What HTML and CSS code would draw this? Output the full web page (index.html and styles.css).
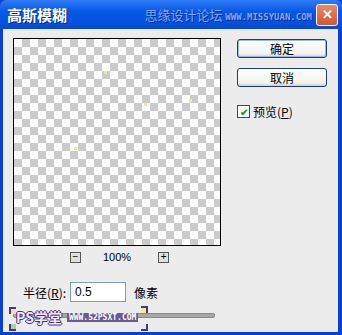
FILE: index.html
```html
<!DOCTYPE html>
<html lang="zh">
<head>
  <meta charset="UTF-8">
  <title>高斯模糊</title>
  <link rel="stylesheet" href="styles.css">
</head>
<body>
  <div class="window">
    <div class="titlebar">
      <span class="title">高斯模糊</span>
      <span class="mark">思缘设计论坛 <small>WWW.MISSYUAN.COM</small></span>
      <button class="close">&#x2715;</button>
    </div>
    <div class="content">
      <div class="main">
        <div class="left">
          <div class="preview">
            <span class="dot" style="left:90px;top:32px"></span>
            <span class="dot" style="left:130px;top:64px"></span>
            <span class="dot" style="left:175px;top:60px"></span>
            <span class="dot" style="left:60px;top:108px"></span>
          </div>
          <div class="zoom">
            <span class="zbtn">&minus;</span>
            <span class="pct">100%</span>
            <span class="zbtn">+</span>
          </div>
        </div>
        <div class="right">
          <button class="btn default">确定</button>
          <button class="btn">取消</button>
          <label class="check"><span class="box">&#x2714;</span>预览(<u>P</u>)</label>
        </div>
      </div>
      <div class="radius">
        <span>半径(<u>R</u>):</span>
        <span class="input">0.5</span>
        <span>像素</span>
      </div>
      <div class="slider">
        <div class="track"></div>
        <span class="corner tl"></span>
        <span class="corner bl"></span>
        <span class="corner tr"></span>
        <span class="corner br"></span>
        <div class="wm"><b>PS学堂</b><i>WWW.52PSXT.COM</i></div>
      </div>
    </div>
  </div>
</body>
</html>
```

FILE: styles.css
```css
body {
  margin: 0;
  font-family: "Noto Sans CJK SC", "Liberation Sans", sans-serif;
  font-size: 12px;
}

.window {
  width: 342px;
  height: 335px;
  background: #0a3fd0;
  display: flex;
  flex-direction: column;
}

.titlebar {
  height: 29px;
  background: linear-gradient(#2f7cf6, #0858e6 40%, #0350dc 85%, #0a48c8);
  display: flex;
  align-items: center;
  padding: 0 4px 0 7px;
  border-radius: 6px 6px 0 0;
}

.title {
  color: white;
  font-weight: bold;
  font-size: 15px;
  text-shadow: 1px 1px 0 #0a2a80;
}

.mark {
  margin-left: auto;
  color: #7fa8f4;
  font-size: 13px;
  margin-right: 4px;
  text-shadow: 1px 1px 0 #0a2a90;
}

.mark small {
  font-family: "DejaVu Sans Mono", monospace;
  font-size: 9px;
  font-weight: bold;
}

.close {
  width: 22px;
  height: 22px;
  border: 1px solid white;
  border-radius: 3px;
  background: linear-gradient(#e8896d, #d45534);
  color: white;
  font-size: 13px;
  font-weight: bold;
  padding: 0;
}

.content {
  flex: 1;
  background: #ececec;
  margin: 0 4px 3px 3px;
  padding: 9px 0 0 10px;
  display: flex;
  flex-direction: column;
}

.main {
  display: flex;
}

.preview {
  position: relative;
  width: 206px;
  height: 206px;
  border: 1px solid black;
  background-color: #fff;
  background-image:
    linear-gradient(45deg, #cbcbcb 25%, transparent 25%, transparent 75%, #cbcbcb 75%),
    linear-gradient(45deg, #cbcbcb 25%, transparent 25%, transparent 75%, #cbcbcb 75%);
  background-size: 16px 16px;
  background-position: 0 0, 8px 8px;
}

.dot {
  position: absolute;
  width: 3px;
  height: 3px;
  background: #f3e6a0;
}

.zoom {
  display: flex;
  align-items: center;
  margin-top: 5px;
  padding-left: 57px;
}

.zbtn {
  width: 9px;
  height: 9px;
  border: 1px solid #555;
  background: #e0e0e0;
  font-size: 10px;
  line-height: 8px;
  text-align: center;
  font-family: "Liberation Sans", sans-serif;
}

.pct {
  font-family: "Liberation Sans", sans-serif;
  font-size: 11px;
  margin: 0 27px 0 22px;
}

.right {
  display: flex;
  flex-direction: column;
  margin-left: 16px;
}

.btn {
  width: 90px;
  height: 19px;
  margin-top: 1px;
  margin-bottom: 9px;
  border: 1px solid #1c3c7a;
  border-radius: 3px;
  background: linear-gradient(#ffffff, #f2f2ee 80%, #d6d0c0);
  font-family: "Noto Sans CJK SC", sans-serif;
  font-size: 12px;
  line-height: 15px;
  padding: 0;
}

.btn.default {
  box-shadow: inset 0 0 0 1px #9cb6e8;
}

.check {
  display: flex;
  align-items: center;
  margin-top: 7px;
  font-size: 12px;
}

.box {
  width: 11px;
  height: 11px;
  border: 1px solid #1c5180;
  background: white;
  color: #1f9a1f;
  font-size: 10px;
  font-weight: bold;
  line-height: 11px;
  text-align: center;
  margin-right: 3px;
}

.radius {
  display: flex;
  align-items: center;
  margin-top: 19px;
  padding-left: 10px;
  font-size: 12px;
}

.input {
  width: 50px;
  height: 18px;
  border: 1px solid #7f9db9;
  background: white;
  margin: 0 8px 0 4px;
  padding-left: 4px;
  line-height: 18px;
  font-family: "Liberation Sans", sans-serif;
}

.slider {
  position: relative;
  height: 30px;
}

.track {
  width: 200px;
  height: 3px;
  margin-top: 11px;
  background: #a8a8a8;
  border: 1px solid #8a8a8a;
  border-radius: 2px;
}

.corner {
  position: absolute;
  width: 5px;
  height: 5px;
  border: 1px solid #4a3a70;
}

.tl { left: -4px; top: 5px; background: #e8e0c8; border-width: 2px 0 0 2px; }
.bl { left: -4px; top: 22px; background: #9fd99f; border-width: 0 0 2px 2px; }
.tr { left: 128px; top: 4px; background: #f3ec9a; border-width: 2px 2px 0 0; }
.br { left: 128px; top: 22px; background: #e8e8e8; border-width: 0 2px 2px 0; }

.wm {
  position: absolute;
  left: 3px;
  top: 7px;
  display: flex;
  align-items: center;
}

.wm b {
  color: #f0e8f8;
  font-size: 14px;
  line-height: 16px;
  text-shadow: 1px 0 #4a2a80, -1px 0 #4a2a80, 0 1px #4a2a80, 0 -1px #4a2a80;
}

.wm i {
  font-style: normal;
  font-family: "DejaVu Sans Mono", monospace;
  font-size: 8px;
  font-weight: bold;
  color: white;
  background: #6a5a90;
  padding: 0 2px;
  margin-left: 5px;
}
```
